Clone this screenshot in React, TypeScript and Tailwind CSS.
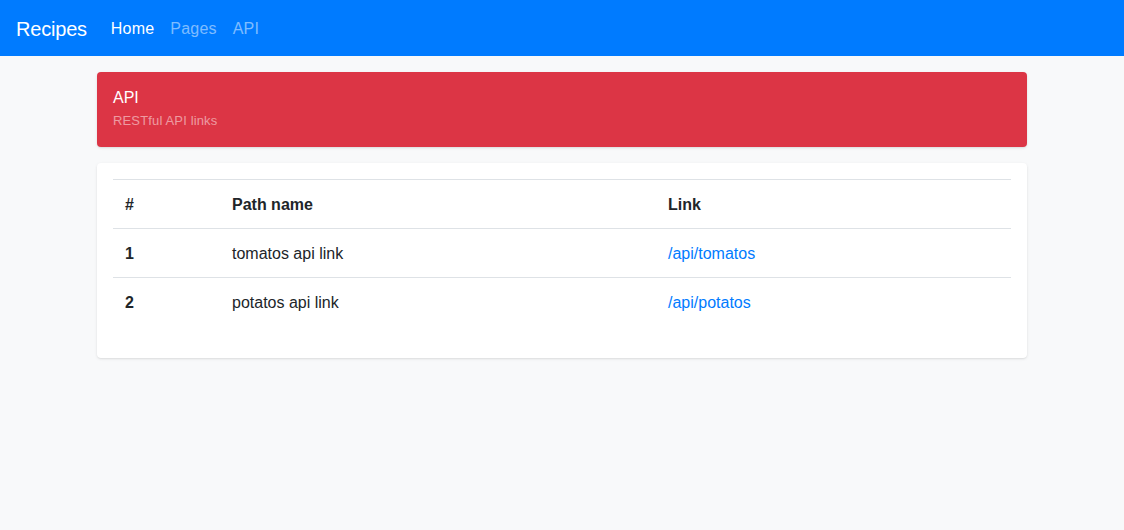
import React from 'react';

const rows = [
  { id: 1, name: 'tomatos api link', path: '/api/tomatos' },
  { id: 2, name: 'potatos api link', path: '/api/potatos' },
];

const App: React.FC = () => {
  return (
    <div className="min-h-[530px] bg-[#f8f9fa] text-[#212529] font-['Liberation_Sans',Arial,sans-serif] text-base leading-6">
      {/* Navbar */}
      <nav className="h-14 bg-[#007bff] px-4 pt-[2px] flex items-center">
        <span className="text-white text-xl leading-[30px] mr-4 tracking-[-0.2px]">Recipes</span>
        <div className="flex tracking-[0.2px]">
          <a className="px-2 py-2 text-white">Home</a>
          <a className="px-2 py-2 text-white/50">Pages</a>
          <a className="px-2 py-2 text-white/50">API</a>
        </div>
      </nav>

      <div className="w-[930px] mx-auto pt-4 space-y-4">
        {/* Header card */}
        <div className="bg-[#dc3545] rounded shadow-sm px-4 pt-4 pb-4 text-white">
          <div className="leading-5">API</div>
          <div className="mt-[3px] text-[13px] leading-5 tracking-[0.15px] text-white/50">RESTful API links</div>
        </div>

        {/* Table card */}
        <div className="bg-white rounded shadow-sm p-4">
          <table className="w-full mb-4 border-collapse text-left">
            <thead>
              <tr className="border-t border-b border-[#dee2e6]">
                <th className="w-[107px] px-3 pt-[13px] pb-[11px] font-bold">#</th>
                <th className="w-[436px] px-3 pt-[13px] pb-[11px] font-bold">Path name</th>
                <th className="px-3 pt-[13px] pb-[11px] font-bold">Link</th>
              </tr>
            </thead>
            <tbody>
              {rows.map((r, i) => (
                <tr key={r.id} className={i === 0 ? 'border-b border-[#dee2e6]' : ''}>
                  <td className="px-3 pt-[13px] pb-[11px] font-bold">{r.id}</td>
                  <td className="px-3 pt-[13px] pb-[11px]">{r.name}</td>
                  <td className="px-3 pt-[13px] pb-[11px]">
                    <a className="text-[#007bff]">{r.path}</a>
                  </td>
                </tr>
              ))}
            </tbody>
          </table>
        </div>
      </div>
    </div>
  );
};

export default App;
